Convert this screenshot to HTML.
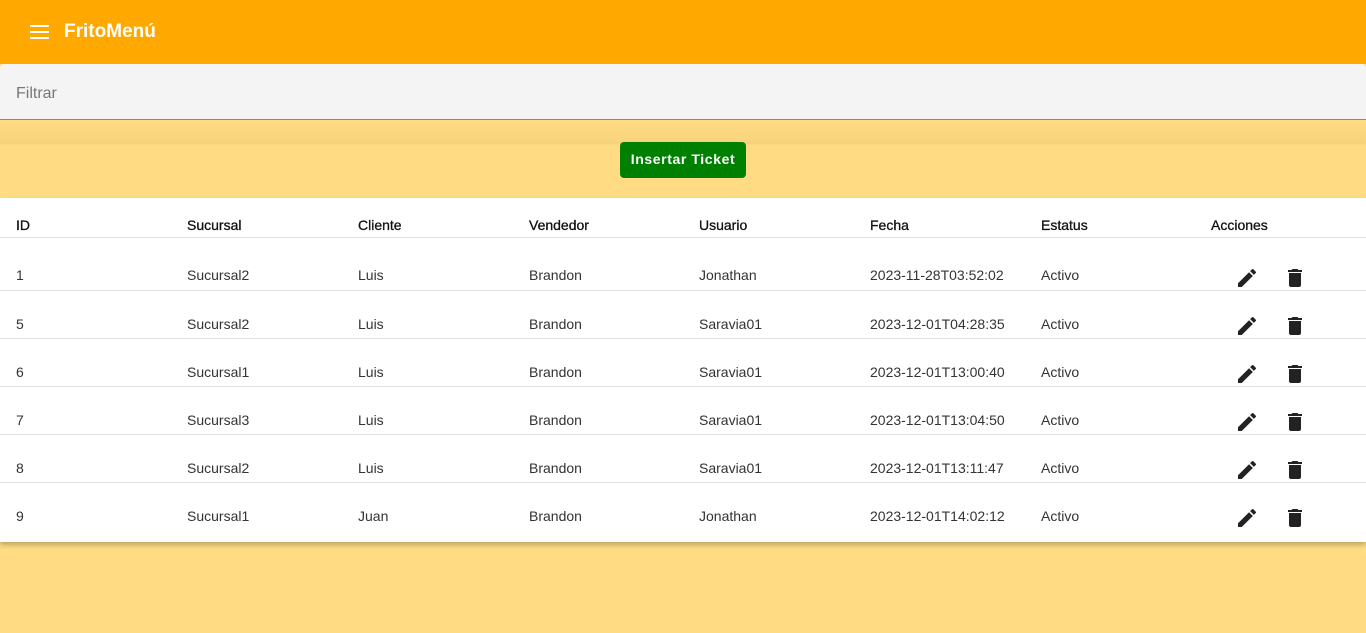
<!DOCTYPE html>
<html><head><meta charset="utf-8"><style>
*{margin:0;padding:0;box-sizing:border-box}
body{width:1366px;height:633px;background:#FFDC84;font-family:"Liberation Sans",sans-serif;overflow:hidden;position:relative}
.top{height:64px;background:#FFA800;position:relative}
.top .ham{position:absolute;left:30px;top:25px;width:19px}
.top .ham i{display:block;height:2px;background:#fff;margin-bottom:4px}
.top h1{position:absolute;left:64px;top:21px;font-size:19px;color:#fff;font-weight:bold}
.filt{position:absolute;top:64px;left:0;width:1366px;height:56px;background:#f4f4f4;border-bottom:1px solid #8a8a8a;border-radius:4px 4px 0 0}
.filt span{position:absolute;left:16px;top:21px;font-size:16px;color:#777}
.band{position:absolute;top:120px;left:0;width:1366px;height:22px;background:linear-gradient(#FFDC84,#f8d47c);box-shadow:0 2px 2px rgba(0,0,0,.06)}
.btn{position:absolute;left:620px;top:142px;width:126px;height:36px;background:#008000;border-radius:4px;color:#fff;font-weight:bold;font-size:14px;letter-spacing:.6px;text-align:center;line-height:34px}
.tbl{position:absolute;top:198px;left:0;width:1366px;height:344px;background:#fff;box-shadow:0 3px 5px rgba(0,0,0,.25)}
.row{position:absolute;left:0;width:1366px;border-bottom:1px solid #e0e0e0;font-size:14px;color:#333}
.row span{position:absolute}
.hd{top:0;height:40px;font-size:14px}
.hd span{top:19px;color:#111;-webkit-text-stroke:.3px #111}
.ic{position:absolute}
</style></head><body>
<div class="top"><div class="ham"><i></i><i></i><i></i></div><h1>FritoMenú</h1></div>
<div class="filt"><span>Filtrar</span></div>
<div class="band"></div>
<div class="btn">Insertar Ticket</div>
<div class="tbl">
<div class="row hd"><span style="left:16px">ID</span><span style="left:187px">Sucursal</span><span style="left:358px">Cliente</span><span style="left:529px">Vendedor</span><span style="left:699px">Usuario</span><span style="left:870px">Fecha</span><span style="left:1041px">Estatus</span><span style="left:1211px">Acciones</span></div>
</div>
<script>
var d=[["1","Sucursal2","Luis","Jonathan","2023-11-28T03:52:02"],["5","Sucursal2","Luis","Saravia01","2023-12-01T04:28:35"],["6","Sucursal1","Luis","Saravia01","2023-12-01T13:00:40"],["7","Sucursal3","Luis","Saravia01","2023-12-01T13:04:50"],["8","Sucursal2","Luis","Saravia01","2023-12-01T13:11:47"],["9","Sucursal1","Juan","Jonathan","2023-12-01T14:02:12"]];
var pen='<svg width="24" height="24" viewBox="0 0 24 24"><path fill="#222" d="M3 17.25V21h3.75L17.81 9.94l-3.75-3.75L3 17.25zM20.71 7.04a1 1 0 000-1.41l-2.34-2.34a1 1 0 00-1.41 0l-1.83 1.83 3.75 3.75 1.83-1.83z"/></svg>';
var tr='<svg width="24" height="24" viewBox="0 0 24 24"><path fill="#222" d="M6 19c0 1.1.9 2 2 2h8c1.1 0 2-.9 2-2V7H6v12zM19 4h-3.5l-1-1h-5l-1 1H5v2h14V4z"/></svg>';
var h='';
d.forEach(function(r,i){var top=i==0?40:93+(i-1)*48;var hh=i==0?53:48;var off=i==0?29:25;var io=i==0?28:23;
h+='<div class="row r" style="top:'+top+'px;height:'+hh+'px;'+(i==5?'border-bottom:none;height:60px':'')+'">'+
'<span style="left:16px;top:'+off+'px">'+r[0]+'</span><span style="left:187px;top:'+off+'px">'+r[1]+'</span><span style="left:358px;top:'+off+'px">'+r[2]+'</span><span style="left:529px;top:'+off+'px">Brandon</span><span style="left:699px;top:'+off+'px">'+r[3]+'</span><span style="left:870px;top:'+off+'px">'+r[4]+'</span><span style="left:1041px;top:'+off+'px">Activo</span>'+
'<span class="ic" style="left:1235px;top:'+io+'px">'+pen+'</span><span class="ic" style="left:1283px;top:'+io+'px">'+tr+'</span></div>';});
document.querySelector('.tbl').insertAdjacentHTML('beforeend',h);
</script>
</body></html>
